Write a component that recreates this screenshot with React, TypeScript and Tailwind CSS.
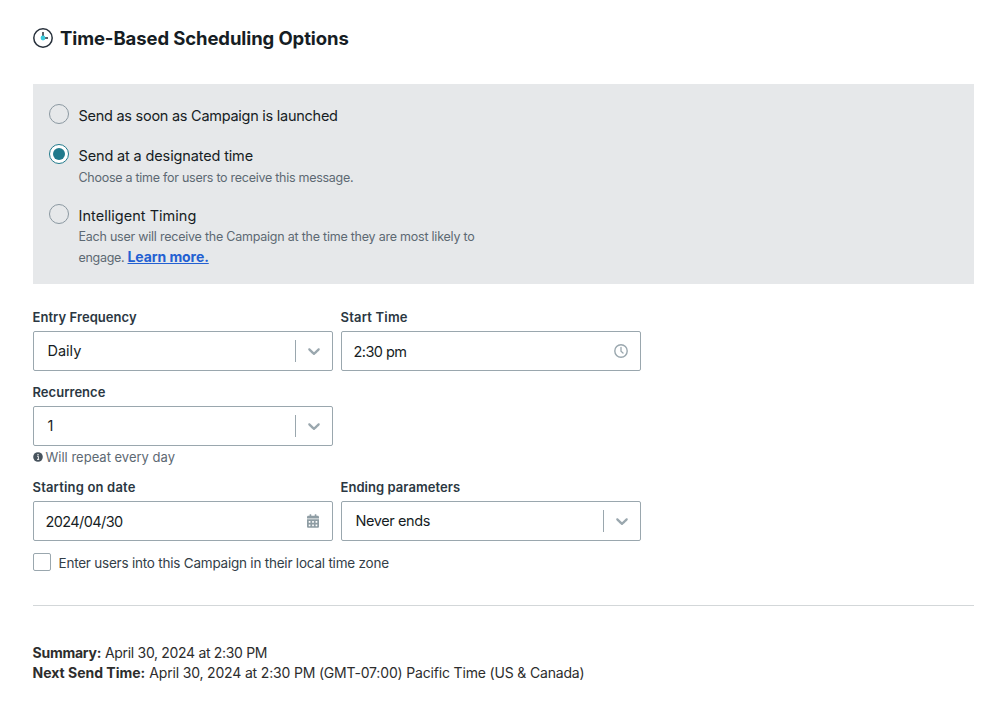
import { useState } from "react";
import type { ReactNode } from "react";

function HeadingClock() {
  return (
    <svg width="20" height="20" viewBox="0 0 20 20" fill="none" className="block shrink-0">
      <circle cx="10" cy="10" r="9.2" stroke="#27303b" strokeWidth="1.5" />
      <path d="M10 4v6h5" stroke="#27303b" strokeWidth="1.5" />
      <circle cx="10" cy="10" r="2.4" fill="#3accdd" />
    </svg>
  );
}

function Chevron() {
  return (
    <svg width="20" height="20" viewBox="0 0 20 20" fill="#9aa7ae" className="block">
      <path d="M4.516 7.548c0.436-0.446 1.043-0.481 1.576 0l3.908 3.747 3.908-3.747c0.533-0.481 1.141-0.446 1.574 0 0.436 0.445 0.408 1.197 0 1.615-0.406 0.418-4.695 4.502-4.695 4.502-0.217 0.223-0.502 0.335-0.787 0.335s-0.57-0.112-0.789-0.335c0 0-4.287-4.084-4.695-4.502s-0.436-1.17 0-1.615z" />
    </svg>
  );
}

function FieldClock() {
  return (
    <svg width="14" height="14" viewBox="0 0 14 14" fill="none" stroke="#9aa7ae" className="block">
      <circle cx="7" cy="7" r="6.2" strokeWidth="1.4" />
      <path d="M7 3.3v4l2 1.7" strokeWidth="1.3" strokeLinecap="round" />
    </svg>
  );
}

function CalendarIcon() {
  return (
    <svg width="12" height="14" viewBox="0 0 448 512" fill="#8f9da4" className="mr-px block">
      <path d="M0 464c0 26.500 21.500 48 48 48h352c26.500 0 48-21.500 48-48V192H0v272zm320-196c0-6.600 5.400-12 12-12h40c6.600 0 12 5.400 12 12v40c0 6.600-5.400 12-12 12h-40c-6.600 0-12-5.400-12-12v-40zm0 128c0-6.600 5.400-12 12-12h40c6.600 0 12 5.400 12 12v40c0 6.600-5.400 12-12 12h-40c-6.600 0-12-5.400-12-12v-40zM192 268c0-6.600 5.400-12 12-12h40c6.600 0 12 5.400 12 12v40c0 6.600-5.400 12-12 12h-40c-6.600 0-12-5.400-12-12v-40zm0 128c0-6.600 5.400-12 12-12h40c6.600 0 12 5.400 12 12v40c0 6.600-5.400 12-12 12h-40c-6.600 0-12-5.400-12-12v-40zM64 268c0-6.600 5.400-12 12-12h40c6.600 0 12 5.400 12 12v40c0 6.600-5.400 12-12 12H76c-6.600 0-12-5.400-12-12v-40zm0 128c0-6.600 5.400-12 12-12h40c6.600 0 12 5.400 12 12v40c0 6.600-5.400 12-12 12H76c-6.600 0-12-5.400-12-12v-40zM400 64h-48V16c0-8.800-7.200-16-16-16h-32c-8.800 0-16 7.200-16 16v48H160V16c0-8.800-7.200-16-16-16h-32c-8.800 0-16 7.200-16 16v48H48C21.500 64 0 85.500 0 112v48h448v-48c0-26.500-21.500-48-48-48z" />
    </svg>
  );
}

function InfoIcon() {
  return (
    <svg width="10" height="10" viewBox="0 0 10 10" className="block shrink-0">
      <circle cx="5" cy="5" r="4.800" fill="#47535d" />
      <path d="M4.200 4.400h1.200v3M4 7.400h2.200" stroke="#fff" strokeWidth="0.900" fill="none" />
      <circle cx="5" cy="2.700" r="0.750" fill="#fff" />
    </svg>
  );
}

function Radio({ selected, onSelect, label, className, children }: {
  selected: boolean;
  onSelect: () => void;
  label: ReactNode;
  className: string;
  children?: ReactNode;
}) {
  return (
    <div className={`flex items-start gap-[9.5px] ${className}`}>
      <button
        role="radio"
        aria-checked={selected}
        onClick={onSelect}
        className={`flex size-5 shrink-0 items-center justify-center rounded-full border ${selected ? "border-[#217a8c] bg-white" : "border-[#8b98a1]"}`}
      >
        {selected && <span className="size-3 rounded-full bg-[#217a8c]" />}
      </button>
      <div className="pt-[2px]">
        <div className="text-[14.5px] leading-5 text-[#161d24]">{label}</div>
        {children}
      </div>
    </div>
  );
}

function Field({ label, children }: { label: ReactNode; children: ReactNode }) {
  return (
    <div className="w-[300px]">
      <div className="-ml-[0.5px] h-6 text-[13px] leading-5 font-semibold text-[#2b3742]">{label}</div>
      {children}
    </div>
  );
}

function Select({ children }: { children: ReactNode }) {
  return (
    <div className="flex h-10 items-center rounded-[2px] border border-[#9aa7ae] bg-white pl-[13.5px]">
      <span className="flex-1 text-[14.5px] leading-5 text-[#161d24]">{children}</span>
      <span className="h-[22px] w-px bg-[#9aa7ae]" />
      <span className="px-2">
        <Chevron />
      </span>
    </div>
  );
}

function Input({ icon, children }: { icon: ReactNode; children: ReactNode }) {
  return (
    <div className="flex h-10 items-center rounded-[2px] border border-[#9aa7ae] bg-white pr-3 pl-[11.5px]">
      <span className="flex-1 pt-[2px] text-[14.5px] leading-5 text-[#161d24]">{children}</span>
      {icon}
    </div>
  );
}

export default function App() {
  const [mode, setMode] = useState(1);
  return (
    <main className="h-[714px] w-[1005px] bg-white pt-[28px] pr-[31px] pl-[33px] font-['Inter',sans-serif]">
      <h1 className="flex h-5 items-center gap-[7px] text-[18.5px] leading-5 font-bold text-[#161d24]">
        <HeadingClock />
        <span className="-mt-px tracking-[-0.1px] whitespace-nowrap">Time-Based Scheduling Options</span>
      </h1>

      <section role="radiogroup" className="mt-9 h-[200px] bg-[#e6e8ea] px-4 pt-5">
        <Radio selected={mode === 0} onSelect={() => setMode(0)} className="h-10" label={<span className="tracking-[-0.26px]">Send as soon as Campaign is launched</span>} />
        <Radio selected={mode === 1} onSelect={() => setMode(1)} className="h-[60px]" label={<span className="tracking-[-0.14px]">Send at a designated time</span>}>
          <p className="pt-[2px] text-[12.5px] leading-5 text-[#5d6973]">
            <span className="tracking-[-0.27px]">Choose a time for users to receive this message.</span>
          </p>
        </Radio>
        <Radio selected={mode === 2} onSelect={() => setMode(2)} className="h-20" label={<span className="tracking-[0.03px]">Intelligent Timing</span>}>
          <p className="pt-px text-[12.5px] leading-5 whitespace-nowrap text-[#5d6973]">
            <span className="tracking-[-0.23px]">Each user will receive the Campaign at the time they are most likely to</span>
            <br />
            <span className="tracking-[-0.3px]">engage. </span>
            <a href="#learn" className="text-[14px] font-bold tracking-[-0.08px] text-[#2360d2] underline">Learn more.</a>
          </p>
        </Radio>
      </section>

      <section className="mt-[23px]">
        <div className="flex gap-2">
          <Field label={<span className="tracking-[0.06px]">Entry Frequency</span>}>
            <Select>Daily</Select>
          </Field>
          <Field label={<span className="tracking-[0.2px]">Start Time</span>}>
            <Input icon={<FieldClock />}><span className="tracking-[-0.55px]">2:30 pm</span></Input>
          </Field>
        </div>
        <div className="mt-[11px]">
          <Field label={<span className="tracking-[0.03px]">Recurrence</span>}>
            <Select>1</Select>
          </Field>
          <div className="mt-[1px] flex h-5 items-center gap-[2.5px] text-[13px] leading-5 text-[#5d6973]">
            <InfoIcon />
            <span className="-mt-px">Will repeat every day</span>
          </div>
        </div>
        <div className="mt-[10px] flex gap-2">
          <Field label={<span className="tracking-[0.18px]">Starting on date</span>}>
            <Input icon={<CalendarIcon />}><span className="tracking-[-0.6px]">2024/04/30</span></Input>
          </Field>
          <Field label={<span className="tracking-[0.05px]">Ending parameters</span>}>
            <Select><span className="tracking-[-0.4px]">Never ends</span></Select>
          </Field>
        </div>
        <label className="mt-3 flex items-start gap-[7.5px] text-[13.5px] leading-5 text-[#333e48]">
          <span className="size-[18px] rounded-[2px] border border-[#9aa7ae] bg-white" />
          <span className="tracking-[-0.22px]">Enter users into this Campaign in their local time zone</span>
        </label>
      </section>

      <hr className="mt-[32px] border-[#d3d7d9]" />

      <footer className="mt-[37px] -ml-[0.5px] text-[14px] leading-5 text-[#2d2d2d]">
        <p>
          <strong className="tracking-[-0.25px]">Summary:</strong> <span className="tracking-[-0.32px]">April 30, 2024 at 2:30 PM</span>
        </p>
        <p>
          <strong>Next Send Time:</strong> <span className="tracking-[-0.17px]">April 30, 2024 at 2:30 PM (GMT-07:00) Pacific Time (US &amp; Canada)</span>
        </p>
      </footer>
    </main>
  );
}
